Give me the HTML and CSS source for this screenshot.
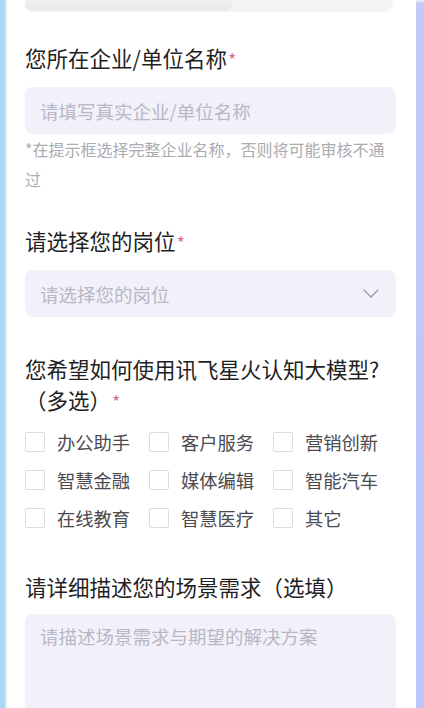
FILE: index.html
```html
<!DOCTYPE html>
<html lang="zh-CN">
<head>
<meta charset="utf-8">
<link rel="stylesheet" href="styles.css">
</head>
<body>
<div class="page">
  <div class="strip-left"></div>
  <main class="card">
    <div class="top-field"><div class="top-fill"></div></div>

    <section class="group g1">
      <div class="label">您所在企业/单位名称<span class="req">*</span></div>
      <input class="field" type="text" placeholder="请填写真实企业/单位名称">
      <div class="hint">*在提示框选择完整企业名称，否则将可能审核不通过</div>
    </section>

    <section class="group g2">
      <div class="label">请选择您的岗位<span class="req">*</span></div>
      <div class="field select">
        <span class="ph">请选择您的岗位</span>
        <svg class="chev" width="16" height="9" viewBox="0 0 16 9"><path d="M1 1 L8 8 L15 1" fill="none" stroke="#9a9aa4" stroke-width="1.3" stroke-linecap="round" stroke-linejoin="round"/></svg>
      </div>
    </section>

    <section class="group g3">
      <div class="label q">您希望如何使用讯飞星火认知大模型?<br>（多选）<span class="req">*</span></div>
      <div class="checks">
        <label class="opt"><span class="box"></span>办公助手</label>
        <label class="opt"><span class="box"></span>客户服务</label>
        <label class="opt"><span class="box"></span>营销创新</label>
        <label class="opt"><span class="box"></span>智慧金融</label>
        <label class="opt"><span class="box"></span>媒体编辑</label>
        <label class="opt"><span class="box"></span>智能汽车</label>
        <label class="opt"><span class="box"></span>在线教育</label>
        <label class="opt"><span class="box"></span>智慧医疗</label>
        <label class="opt"><span class="box"></span>其它</label>
      </div>
    </section>

    <section class="group g4">
      <div class="label">请详细描述您的场景需求（选填）</div>
      <textarea class="field area" placeholder="请描述场景需求与期望的解决方案"></textarea>
    </section>
  </main>
  <div class="strip-right"></div>
</div>
</body>
</html>
```

FILE: styles.css
```css
* { box-sizing: border-box; }
html, body {
  margin: 0;
  padding: 0;
  width: 424px;
  height: 708px;
  overflow: hidden;
  background: #fff;
  font-family: "Noto Sans CJK SC", "Noto Sans", sans-serif;
}
.page {
  display: flex;
  width: 424px;
  height: 708px;
}
.strip-left {
  width: 8px;
  flex: none;
  background: linear-gradient(to right, #a9d5f6 0, #aed8f6 5px, #e6f8f2 6px, #f6fbfb 8px);
}
.strip-right {
  width: 8px;
  flex: none;
  background: linear-gradient(to bottom, #f4f4fb 0, #c3c9f9 3px, #bcc6fa 100%);
}
.card {
  flex: 1;
  background: #fff;
  padding: 0 20px 0 17px;
  overflow: hidden;
}
.top-field {
  height: 12px;
  margin-right: 3px;
  background: #f5f5f6;
  border-radius: 0 0 8px 8px;
  display: flex;
}
.top-fill {
  width: 207px;
  height: 10px;
  background: linear-gradient(to bottom, #f1f1f2, #e9e9ea);
  border-radius: 0 0 6px 6px;
  box-shadow: 0 1px 2px rgba(0,0,0,0.05);
}
.group { display: flex; flex-direction: column; }
.g1 { margin-top: 31px; }
.g2 { margin-top: 32px; }
.g3 { margin-top: 36px; }
.g4 { margin-top: 35px; }
.label {
  font-size: 21.5px;
  line-height: 30px;
  color: #1f1f24;
  margin-bottom: 13px;
}
.label.q { line-height: 31px; margin-bottom: 6px; }
.g4 .label { margin-bottom: 12px; }
.req {
  color: #d8718c;
  font-size: 18px;
  margin-left: 1px;
}
.field {
  display: block;
  width: 100%;
  height: 47px;
  border: none;
  outline: none;
  background: #f2f1fa;
  border-radius: 8px;
  padding: 0 15px;
  font-family: inherit;
  font-size: 18.5px;
  color: #333;
}
.field::placeholder, .ph { color: #b8b7c6; }
.select {
  display: flex;
  align-items: center;
  justify-content: space-between;
  padding-right: 17px;
}
.chev { flex: none; }
.hint {
  font-size: 16px;
  line-height: 30px;
  color: #ababb0;
}
.checks {
  display: grid;
  grid-template-columns: 124px 124px 1fr;
  grid-auto-rows: 38px;
}
.opt {
  display: flex;
  align-items: center;
  gap: 12px;
  font-size: 18.3px;
  color: #4a4a50;
}
.box {
  width: 20px;
  height: 20px;
  flex: none;
  border: 1px solid #dcdce0;
  border-radius: 2px;
  background: #fff;
}
.area {
  height: 130px;
  resize: none;
  padding-top: 9px;
  line-height: 26px;
  border-radius: 8px 8px 0 0;
}
```
